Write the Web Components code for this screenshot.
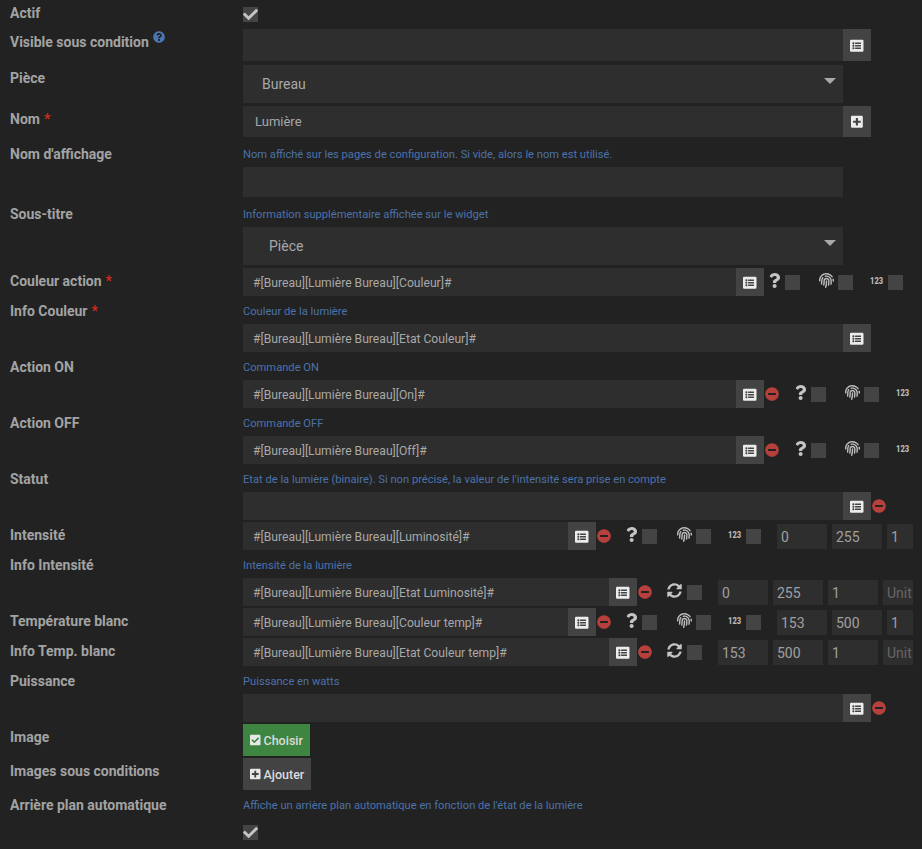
<!DOCTYPE html>
<html lang="fr">
<head>
<meta charset="utf-8">
<title>Lumière</title>
<style>
  html, body { margin: 0; background: #222; }
  body { font-family: Roboto, "Liberation Sans", sans-serif; color: #a8a8a8; overflow: hidden; }
</style>
</head>
<body>
<light-form>
  <form-row label="Actif" gap="0"><check-box checked></check-box></form-row>
  <form-row label="Visible sous condition" info gap="4"><cmd-field w="600" h="32" btn="list"></cmd-field></form-row>
  <form-row label="Pièce" gap="3"><select-box w="600" value="Bureau" pad="19"></select-box></form-row>
  <form-row label="Nom" required gap="4"><cmd-field w="600" h="31" btn="plus" value="Lumière" pad="12" size="13"></cmd-field></form-row>
  <form-row label="Nom d'affichage" help="Nom affiché sur les pages de configuration. Si vide, alors le nom est utilisé." gap="4"><cmd-field w="600" h="30"></cmd-field></form-row>
  <form-row label="Sous-titre" help="Information supplémentaire affichée sur le widget" gap="3"><select-box w="600" value="Pièce" pad="26"></select-box></form-row>
  <form-row label="Couleur action" required>
    <cmd-field w="493" btn="list" value="#[Bureau][Lumière Bureau][Couleur]#"></cmd-field>
    <opt-box icon="question" style="margin-left:5px"></opt-box>
    <opt-box icon="fingerprint" style="margin-left:19px"></opt-box>
    <opt-box icon="digits" style="margin-left:17px"></opt-box>
  </form-row>
  <form-row label="Info Couleur" required help="Couleur de la lumière"><cmd-field w="600" btn="list" value="#[Bureau][Lumière Bureau][Etat Couleur]#"></cmd-field></form-row>
  <form-row label="Action ON" help="Commande ON">
    <cmd-field w="493" btn="list" value="#[Bureau][Lumière Bureau][On]#"></cmd-field>
    <remove-icon></remove-icon>
    <opt-box icon="question" style="margin-left:16px"></opt-box>
    <opt-box icon="fingerprint" style="margin-left:19px"></opt-box>
    <opt-box icon="digits" nobox style="margin-left:17px"></opt-box>
  </form-row>
  <form-row label="Action OFF" help="Commande OFF">
    <cmd-field w="493" btn="list" value="#[Bureau][Lumière Bureau][Off]#"></cmd-field>
    <remove-icon></remove-icon>
    <opt-box icon="question" style="margin-left:16px"></opt-box>
    <opt-box icon="fingerprint" style="margin-left:19px"></opt-box>
    <opt-box icon="digits" nobox style="margin-left:17px"></opt-box>
  </form-row>
  <form-row label="Statut" help="Etat de la lumière (binaire). Si non précisé, la valeur de l'intensité sera prise en compte">
    <cmd-field w="600" btn="list"></cmd-field>
    <remove-icon></remove-icon>
  </form-row>
  <form-row label="Intensité">
    <cmd-field w="325" btn="list" value="#[Bureau][Lumière Bureau][Luminosité]#"></cmd-field>
    <remove-icon></remove-icon>
    <opt-box icon="question" style="margin-left:15px"></opt-box>
    <opt-box icon="fingerprint" style="margin-left:20px"></opt-box>
    <opt-box icon="digits" style="margin-left:17px"></opt-box>
    <num-fields values="0,255,1" style="margin-left:16px"></num-fields>
  </form-row>
  <form-row label="Info Intensité" help="Intensité de la lumière">
    <cmd-field w="366" btn="list" value="#[Bureau][Lumière Bureau][Etat Luminosité]#"></cmd-field>
    <remove-icon></remove-icon>
    <opt-box icon="sync" style="margin-left:15px"></opt-box>
    <num-fields values="0,255,1" unit style="margin-left:16px"></num-fields>
  </form-row>
  <form-row label="Température blanc">
    <cmd-field w="325" btn="list" value="#[Bureau][Lumière Bureau][Couleur temp]#"></cmd-field>
    <remove-icon></remove-icon>
    <opt-box icon="question" style="margin-left:15px"></opt-box>
    <opt-box icon="fingerprint" style="margin-left:20px"></opt-box>
    <opt-box icon="digits" style="margin-left:17px"></opt-box>
    <num-fields values="153,500,1" style="margin-left:16px"></num-fields>
  </form-row>
  <form-row label="Info Temp. blanc">
    <cmd-field w="366" btn="list" value="#[Bureau][Lumière Bureau][Etat Couleur temp]#"></cmd-field>
    <remove-icon></remove-icon>
    <opt-box icon="sync" style="margin-left:15px"></opt-box>
    <num-fields values="153,500,1" unit style="margin-left:16px"></num-fields>
  </form-row>
  <form-row label="Puissance" help="Puissance en watts">
    <cmd-field w="600" btn="list"></cmd-field>
    <remove-icon></remove-icon>
  </form-row>
  <form-row label="Image"><action-button icon="checkSquare" kind="ok">Choisir</action-button></form-row>
  <form-row label="Images sous conditions"><action-button icon="plusSquare">Ajouter</action-button></form-row>
  <form-row label="Arrière plan automatique" help="Affiche un arrière plan automatique en fonction de l'état de la lumière"><check-box checked></check-box></form-row>
</light-form>

<script>
// font awesome 5 solid shapes
const ICONS = {
  check: [512, 'M173.898 439.404l-166.4-166.4c-9.997-9.997-9.997-26.206 0-36.204l36.203-36.204c9.997-9.998 26.207-9.998 36.204 0L192 312.69 432.095 72.596c9.997-9.997 26.207-9.997 36.204 0l36.203 36.204c9.997 9.997 9.997 26.206 0 36.204l-294.4 294.401c-9.998 9.997-26.207 9.997-36.204-.001z'],
  list: [512, 'M464 480H48c-26.51 0-48-21.49-48-48V80c0-26.51 21.49-48 48-48h416c26.51 0 48 21.49 48 48v352c0 26.51-21.49 48-48 48zM128 120c-22.091 0-40 17.909-40 40s17.909 40 40 40 40-17.909 40-40-17.909-40-40-40zm0 96c-22.091 0-40 17.909-40 40s17.909 40 40 40 40-17.909 40-40-17.909-40-40-40zm0 96c-22.091 0-40 17.909-40 40s17.909 40 40 40 40-17.909 40-40-17.909-40-40-40zm288-136v-32c0-6.627-5.373-12-12-12H204c-6.627 0-12 5.373-12 12v32c0 6.627 5.373 12 12 12h200c6.627 0 12-5.373 12-12zm0 96v-32c0-6.627-5.373-12-12-12H204c-6.627 0-12 5.373-12 12v32c0 6.627 5.373 12 12 12h200c6.627 0 12-5.373 12-12zm0 96v-32c0-6.627-5.373-12-12-12H204c-6.627 0-12 5.373-12 12v32c0 6.627 5.373 12 12 12h200c6.627 0 12-5.373 12-12z'],
  minus: [512, 'M256 8C119 8 8 119 8 256s111 248 248 248 248-111 248-248S393 8 256 8zM124 296c-6.6 0-12-5.4-12-12v-56c0-6.6 5.4-12 12-12h264c6.6 0 12 5.4 12 12v56c0 6.6-5.4 12-12 12H124z'],
  question: [384, 'M202.021 0C122.202 0 70.503 32.703 29.914 91.026c-7.363 10.58-5.093 25.086 5.178 32.874l43.138 32.709c10.373 7.865 25.132 6.026 33.253-4.148 25.049-31.381 43.63-49.449 82.757-49.449 30.764 0 68.816 19.799 68.816 49.631 0 22.552-18.617 34.134-48.993 51.164-35.423 19.86-82.299 44.576-82.299 106.405V320c0 13.255 10.745 24 24 24h72.471c13.255 0 24-10.745 24-24v-5.773c0-42.86 125.268-44.645 125.268-160.627C377.504 66.256 286.902 0 202.021 0zM192 373.459c-38.196 0-69.271 31.075-69.271 69.271 0 38.195 31.075 69.27 69.271 69.27s69.271-31.075 69.271-69.271-31.075-69.27-69.271-69.27z'],
  questionCircle: [512, 'M504 256c0 136.997-111.043 248-248 248S8 392.997 8 256C8 119.083 119.043 8 256 8s248 111.083 248 248zM262.655 90c-54.497 0-89.255 22.957-116.549 63.758-3.536 5.286-2.353 12.415 2.715 16.258l34.699 26.31c5.205 3.947 12.621 3.008 16.665-2.122 17.864-22.658 30.113-35.797 57.303-35.797 20.429 0 45.698 13.148 45.698 32.958 0 14.976-12.363 22.667-32.534 33.976C247.128 238.528 216 254.941 216 296v4c0 6.627 5.373 12 12 12h56c6.627 0 12-5.373 12-12v-1.333c0-28.462 83.186-29.647 83.186-106.667 0-58.002-60.165-102-116.531-102zM256 338c-25.365 0-46 20.635-46 46 0 25.364 20.635 46 46 46s46-20.636 46-46c0-25.365-20.635-46-46-46z'],
  sync: [512, 'M370.72 133.28C339.458 104.008 298.888 87.962 255.848 88c-77.458.068-144.328 53.178-162.791 126.85-1.344 5.363-6.122 9.15-11.651 9.15H24.103c-7.498 0-13.194-6.807-11.807-14.176C33.933 94.924 134.813 8 256 8c66.448 0 126.791 26.136 171.315 68.685L463.03 40.97C478.149 25.851 504 36.559 504 57.941V192c0 13.255-10.745 24-24 24H345.941c-21.382 0-32.09-25.851-16.971-40.971l41.75-41.749zM32 296h134.059c21.382 0 32.09 25.851 16.971 40.971l-41.75 41.75c31.262 29.273 71.835 45.319 114.876 45.28 77.418-.07 144.315-53.144 162.787-126.849 1.344-5.363 6.122-9.15 11.651-9.15h57.304c7.498 0 13.194 6.807 11.807 14.176C478.067 417.076 377.187 504 256 504c-66.448 0-126.791-26.136-171.315-68.685L48.97 471.03C33.851 486.149 8 475.441 8 454.059V320c0-13.255 10.745-24 24-24z'],
  checkSquare: [448, 'M400 480H48c-26.51 0-48-21.49-48-48V80c0-26.51 21.49-48 48-48h352c26.51 0 48 21.49 48 48v352c0 26.51-21.49 48-48 48zm-204.686-98.059l184-184c6.248-6.248 6.248-16.379 0-22.627l-22.627-22.627c-6.248-6.248-16.379-6.249-22.628 0L184 302.745l-70.059-70.059c-6.248-6.248-16.379-6.248-22.628 0l-22.627 22.627c-6.248 6.248-6.248 16.379 0 22.627l104 104c6.249 6.25 16.379 6.25 22.628.001z'],
  plusSquare: [448, 'M400 32H48C21.5 32 0 53.5 0 80v352c0 26.5 21.5 48 48 48h352c26.5 0 48-21.5 48-48V80c0-26.5-21.5-48-48-48zm-32 252c0 6.6-5.4 12-12 12h-92v92c0 6.6-5.4 12-12 12h-56c-6.6 0-12-5.4-12-12v-92H92c-6.6 0-12-5.4-12-12v-56c0-6.6 5.4-12 12-12h92v-92c0-6.6 5.4-12 12-12h56c6.6 0 12 5.4 12 12v92h92c6.6 0 12 5.4 12 12v56z'],
  fingerprint: [512, 'M256.12 245.96c-13.25 0-24 10.74-24 24 1.14 72.25-8.14 141.9-27.7 211.55-2.73 9.72 2.15 30.49 23.12 30.49 10.48 0 20.11-6.92 23.09-17.52 13.53-47.91 31.04-125.41 29.48-224.52.01-13.25-10.73-24-23.99-24zm-.86-81.73C194 164.16 151.25 211.3 152.1 265.32c.75 47.94-3.75 95.91-13.37 142.55-2.69 12.98 5.67 25.69 18.64 28.36 13.05 2.67 25.67-5.67 28.36-18.64 10.34-50.2 15.17-101.81 14.37-153.02-.41-25.95 19.92-52.49 54.45-52.34 31.31.47 57.15 25.34 57.62 55.47.77 48.05-2.81 96.33-10.61 143.55-2.17 13.06 6.69 25.42 19.76 27.58 19.97 3.33 26.81-15.1 27.58-19.77 8.28-50.03 12.06-101.21 11.27-152.11-.88-55.8-47.94-101.88-104.91-102.72zm-110.69-19.78c-10.3-8.34-25.37-6.8-33.76 3.48-25.62 31.5-39.39 71.28-38.75 112 .59 37.58-2.47 75.27-9.11 112.05-2.34 13.05 6.31 25.53 19.36 27.89 20.11 3.5 27.07-14.81 27.89-19.36 7.19-39.84 10.5-80.66 9.86-121.33-.47-29.88 9.2-57.88 28-80.97 8.35-10.28 6.79-25.39-3.49-33.76zm109.47-62.33c-15.41-.41-30.87 1.44-45.78 4.97-12.89 3.06-20.87 15.98-17.83 28.89 3.06 12.89 16 20.83 28.89 17.83 11.05-2.61 22.47-3.77 34-3.69 75.43 1.13 137.73 61.5 138.88 134.58.59 37.88-1.28 76.11-5.58 113.63-1.5 13.17 7.95 25.08 21.11 26.58 16.72 1.95 25.51-11.88 26.58-21.11a929.06 929.06 0 0 0 5.89-119.85c-1.56-98.75-85.07-180.33-186.16-181.83zm252.07 121.45c-2.86-12.92-15.51-21.2-28.61-18.27-12.94 2.86-21.12 15.66-18.26 28.61 4.71 21.41 4.91 37.41 4.7 61.6-.11 13.27 10.55 24.09 23.8 24.2h.2c13.17 0 23.89-10.61 24-23.8.18-22.18.4-44.11-5.83-72.34zm-40.12-90.72C417.29 43.46 337.6 1.29 252.81.02 183.02-.82 118.47 24.91 70.46 72.94 24.09 119.37-.9 181.04.14 246.65l-.12 21.47c-.39 13.25 10.03 24.31 23.28 24.69.23.02.48.02.72.02 12.92 0 23.59-10.3 23.97-23.3l.16-23.64c-.83-52.5 19.16-101.86 56.28-139 38.76-38.8 91.34-59.67 147.68-58.86 69.45 1.03 134.73 35.56 174.62 92.39 7.61 10.86 22.56 13.45 33.42 5.86 10.84-7.62 13.46-22.59 5.84-33.43z']
}

function svg (name, h, color) {
  const [w, d] = ICONS[name]
  return `<svg width="${h * w / 512}" height="${h}" viewBox="0 0 ${w} 512" fill="${color}" style="display:block;flex:none"><path d="${d}"/></svg>`
}

class LightForm extends HTMLElement {
  constructor () {
    super()
    this.attachShadow({ mode: 'open' }).innerHTML = `
      <style>:host { display: block; width: 922px; height: 849px; overflow: hidden; }</style>
      <slot></slot>`
  }
}

class FormRow extends HTMLElement {
  constructor () {
    super()
    const label = this.getAttribute('label')
    const help = this.getAttribute('help')
    const star = this.hasAttribute('required') ? '<span class="star">*</span>' : ''
    const info = this.hasAttribute('info') ? `<span class="info">${svg('questionCircle', 12, '#4a76b3')}</span>` : ''
    this.attachShadow({ mode: 'open' }).innerHTML = `
      <style>
        :host { display: grid; grid-template-columns: 243px 1fr; margin-bottom: 2px; }
        :host([gap="0"]) { margin-bottom: 0; }
        :host([gap="3"]) { margin-bottom: 3px; }
        :host([gap="4"]) { margin-bottom: 4px; }
        .label {
          padding: 5px 0 0 10px;
          font: 700 14px/16px Roboto, sans-serif;
          color: #a3a3a3;
          white-space: nowrap;
        }
        .star { color: #d3281c; margin-left: 4px; }
        .info { display: inline-block; height: 12px; vertical-align: top; margin: -3px 0 0 4px; }
        .help {
          font: 400 11.15px/27px Roboto, sans-serif;
          height: 26px;
          color: #4c72aa;
          white-space: nowrap;
        }
        .body { display: flex; align-items: flex-start; min-width: 0; }
      </style>
      <div class="label">${label}${star}${info}</div>
      <div>
        ${help ? `<div class="help">${help}</div>` : ''}
        <div class="body"><slot></slot></div>
      </div>`
  }
}

class CheckBox extends HTMLElement {
  constructor () {
    super()
    const mark = this.hasAttribute('checked') ? svg('check', 15, '#c4c4c4') : ''
    this.attachShadow({ mode: 'open' }).innerHTML = `
      <style>
        :host { display: block; width: 15px; height: 15px; margin: 7px 0; background: #444; flex: none; }
      </style>
      ${mark}`
  }
}

class CmdField extends HTMLElement {
  constructor () {
    super()
    const w = this.getAttribute('w')
    const h = +this.getAttribute('h') || 28
    const value = this.getAttribute('value') || ''
    const pad = this.getAttribute('pad') || 10
    const size = this.getAttribute('size') || 12.15
    const btn = this.getAttribute('btn')
    // command fields sit a bit lower than the name field
    const line = this.hasAttribute('size') ? h + 1 : h + 2
    this.attachShadow({ mode: 'open' }).innerHTML = `
      <style>
        :host { display: flex; flex: none; height: ${h}px; }
        .value {
          width: ${w}px;
          box-sizing: border-box;
          padding-left: ${pad}px;
          background: #2e2e2e;
          color: #a8a8a8;
          font: 400 ${size}px/${line}px Roboto, sans-serif;
          white-space: nowrap;
          overflow: hidden;
        }
        .btn { width: 28px; box-sizing: border-box; padding-top: 1px; background: #434343; display: flex; align-items: center; justify-content: center; }
      </style>
      <div class="value">${value}</div>
      ${btn ? `<div class="btn">${svg(btn === 'plus' ? 'plusSquare' : 'list', 13.5, '#ececec')}</div>` : ''}`
  }
}

class SelectBox extends HTMLElement {
  constructor () {
    super()
    this.attachShadow({ mode: 'open' }).innerHTML = `
      <style>
        :host {
          display: flex; align-items: center; justify-content: space-between;
          box-sizing: border-box;
          width: ${this.getAttribute('w')}px; height: 38px; flex: none;
          padding: 0 7px 0 ${this.getAttribute('pad')}px;
          background: #2e2e2e;
          color: #a8a8a8;
          font: 400 14px Roboto, sans-serif;
        }
        .arrow {
          width: 0; height: 0; margin-bottom: 6px;
          border: 6px solid transparent; border-bottom: 0;
          border-top-color: #a8a8a8;
        }
      </style>
      <span>${this.getAttribute('value')}</span><span class="arrow"></span>`
  }
}

class RemoveIcon extends HTMLElement {
  constructor () {
    super()
    this.attachShadow({ mode: 'open' }).innerHTML = `
      <style>:host { display: flex; align-items: center; height: 28px; margin-left: 1px; flex: none; }</style>
      ${svg('minus', 14, '#b8403c')}`
  }
}

class OptBox extends HTMLElement {
  constructor () {
    super()
    const kind = this.getAttribute('icon')
    let icon = ''
    let gap = 4.75
    if (kind === 'question') icon = svg('question', 15, '#c4c4c4')
    if (kind === 'fingerprint') { icon = svg('fingerprint', 15, '#bebebe'); gap = 4 }
    if (kind === 'sync') { icon = svg('sync', 15, '#c4c4c4'); gap = 5 }
    if (kind === 'digits') { icon = '<span class="digits"><span>123</span></span>'; gap = 6 }
    const box = this.hasAttribute('nobox') ? '' : '<span class="box"></span>'
    this.attachShadow({ mode: 'open' }).innerHTML = `
      <style>
        :host { display: flex; align-items: center; gap: ${gap}px; height: 28px; flex: none; }
        .digits { display: block; width: 12px; height: 10px; margin-top: -2px; }
        .digits span {
          display: block;
          font: 900 9.5px/10px Roboto, sans-serif;
          color: #b8b8b8;
          white-space: nowrap;
          transform: scaleX(.8);
          transform-origin: left;
        }
        .box { width: 15px; height: 15px; background: #444; margin-top: 1px; }
        svg { margin-top: -3px; }
      </style>
      ${icon}${box}`
  }
}

class NumFields extends HTMLElement {
  constructor () {
    super()
    const values = this.getAttribute('values').split(',')
    const cells = values.map(v => `<div class="cell">${v}</div>`).join('')
    const unit = this.hasAttribute('unit') ? '<div class="cell unit">Unit</div>' : ''
    this.attachShadow({ mode: 'open' }).innerHTML = `
      <style>
        :host { display: flex; gap: 5px; padding-top: 2px; flex: none; }
        .cell {
          width: 50px; height: 25px;
          box-sizing: border-box;
          padding-left: 4px;
          background: #2e2e2e;
          color: #a0a0a0;
          font: 400 14px/26px Roboto, sans-serif;
          overflow: hidden;
        }
        .cell:last-child { width: 26px; }
        .unit:last-child { width: 30px; color: #666; }
      </style>
      ${cells}${unit}`
  }
}

class ActionButton extends HTMLElement {
  constructor () {
    super()
    const ok = this.getAttribute('kind') === 'ok'
    this.attachShadow({ mode: 'open' }).innerHTML = `
      <style>
        :host {
          display: flex; align-items: center; gap: 3px;
          height: 32px; padding: 0 7px 0 7px;
          background: ${ok ? '#3d8540' : '#434343'};
          color: #dcdcdc;
          font: 500 12.5px Roboto, sans-serif;
          flex: none;
        }
      </style>
      ${svg(this.getAttribute('icon'), 12, '#e8e8e8')}<slot></slot>`
  }
}

customElements.define('light-form', LightForm)
customElements.define('form-row', FormRow)
customElements.define('check-box', CheckBox)
customElements.define('cmd-field', CmdField)
customElements.define('select-box', SelectBox)
customElements.define('remove-icon', RemoveIcon)
customElements.define('opt-box', OptBox)
customElements.define('num-fields', NumFields)
customElements.define('action-button', ActionButton)
</script>
</body>
</html>
